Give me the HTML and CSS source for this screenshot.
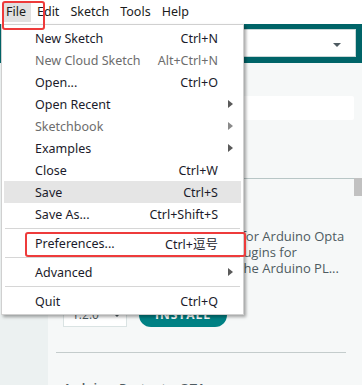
FILE: index.html
```html
<!DOCTYPE html>
<html lang="en">
<head>
    <meta charset="UTF-8">
    <title>Arduino IDE - File menu</title>
    <link rel="stylesheet" href="styles.css">
</head>
<body>
    <div class="menubar">
        <span class="menubar-item active">File</span>
        <span class="menubar-item">Edit</span>
        <span class="menubar-item">Sketch</span>
        <span class="menubar-item">Tools</span>
        <span class="menubar-item">Help</span>
    </div>

    <div class="toolbar">
        <div class="board-select">
            <span class="caret"></span>
        </div>
    </div>

    <div class="workspace">
        <div class="sidebar"></div>
        <div class="content">
            <div class="search"></div>
            <div class="divider-top"></div>
            <div class="scroll-thumb"></div>
            <div class="lib-item">
                <div class="lib-title">Arduino_Opta_Blueprint</div>
                <div class="lib-desc">
                    <div class="line">Library that extends the core for Arduino Opta</div>
                    <div class="line">Allow to use expansion and plugins for</div>
                    <div class="line">Arduino Opta from within all the Arduino PL...</div>
                </div>
                <div class="lib-actions">
                    <div class="version">1.2.0 <span class="caret small"></span></div>
                    <button class="install">INSTALL</button>
                </div>
            </div>
            <div class="lib-sep"></div>
            <div class="lib-title next">Arduino_Portenta_OTA</div>
        </div>
    </div>

    <!-- open File menu -->
    <div class="menu">
        <div class="menu-item"><span>New Sketch</span><span class="key">Ctrl+N</span></div>
        <div class="menu-item disabled"><span>New Cloud Sketch</span><span class="key">Alt+Ctrl+N</span></div>
        <div class="menu-item"><span>Open...</span><span class="key">Ctrl+O</span></div>
        <div class="menu-item sub"><span>Open Recent</span></div>
        <div class="menu-item sub disabled"><span>Sketchbook</span></div>
        <div class="menu-item sub"><span>Examples</span></div>
        <div class="menu-item"><span>Close</span><span class="key">Ctrl+W</span></div>
        <div class="menu-item hover"><span>Save</span><span class="key">Ctrl+S</span></div>
        <div class="menu-item"><span>Save As...</span><span class="key">Ctrl+Shift+S</span></div>
        <div class="menu-sep"></div>
        <div class="menu-item"><span>Preferences...</span><span class="key">Ctrl+逗号</span></div>
        <div class="menu-sep"></div>
        <div class="menu-item sub"><span>Advanced</span></div>
        <div class="menu-sep"></div>
        <div class="menu-item"><span>Quit</span><span class="key">Ctrl+Q</span></div>
    </div>

    <!-- red annotation boxes -->
    <div class="mark mark-file"></div>
    <div class="mark mark-prefs"></div>
</body>
</html>
```

FILE: styles.css
```css
body {
    margin: 0;
    width: 362px;
    height: 385px;
    overflow: hidden;
    position: relative;
    font-family: 'Noto Sans', 'Noto Sans CJK SC', sans-serif;
    background: #f6f8f8;
}

.menubar {
    height: 24px;
    background: #fff;
    display: flex;
    align-items: center;
    padding-left: 1px;
    font-size: 12.5px;
    color: #1b1b1b;
}

.menubar-item {
    padding: 0 5px;
    height: 20px;
    line-height: 20px;
    margin-right: 1px;
}

.menubar-item.active {
    background: #e1e1e1;
    margin-left: 2px;
    padding-left: 3px;
}

.toolbar {
    height: 39px;
    background: #006468;
    display: flex;
    justify-content: flex-end;
    padding: 5px 6px 0 0;
    box-sizing: border-box;
}

.board-select {
    width: 250px;
    height: 28px;
    background: #fff;
    border: 1px solid #c9d7d7;
    box-sizing: border-box;
    position: relative;
}

.caret {
    position: absolute;
    right: 14px;
    top: 13px;
    border-left: 4px solid transparent;
    border-right: 4px solid transparent;
    border-top: 4px solid #4e5b61;
}

.workspace {
    display: flex;
    height: 322px;
}

.sidebar {
    width: 48px;
    background: #ecf1f1;
}

.content {
    flex: 1;
    position: relative;
    font-family: 'Open Sans', sans-serif;
}

.search {
    margin: 33px 8px 0 8px;
    height: 24px;
    background: #fff;
    border-radius: 2px;
}

.divider-top {
    margin-top: 58px;
    height: 1px;
    background: #b8c6c6;
}

.scroll-thumb {
    position: absolute;
    right: 0;
    top: 115px;
    width: 8px;
    height: 18px;
    background: #c1c1c1;
}

.lib-item {
    padding: 0 16px 0 15px;
}

.lib-title {
    font-size: 13px;
    font-weight: 600;
    color: #4e5b61;
    height: 30px;
    line-height: 30px;
    margin-top: 19px;
}

.lib-desc {
    font-size: 13px;
    color: #4e5b61;
    line-height: 16px;
}

.line {
    white-space: nowrap;
    overflow: hidden;
}

.lib-actions {
    display: flex;
    align-items: center;
    gap: 12px;
    margin-top: 26px;
}

.version {
    width: 64px;
    height: 25px;
    box-sizing: border-box;
    border: 1px solid #dae3e3;
    background: #fff;
    font-size: 12px;
    color: #4e5b61;
    padding-left: 8px;
    line-height: 23px;
    position: relative;
}

.caret.small {
    right: 5px;
    top: 10px;
    border-top-color: #4e5b61;
}

.install {
    width: 88px;
    height: 24px;
    border: none;
    border-radius: 12px;
    background: #008184;
    color: #fff;
    font-family: 'Open Sans', sans-serif;
    font-weight: 700;
    font-size: 12px;
    letter-spacing: 1px;
}

.lib-sep {
    margin: 25px 16px 0 8px;
    height: 1px;
    background: #c4cccc;
}

.lib-title.next {
    padding-left: 15px;
    margin-top: 20px;
}

.menu {
    position: absolute;
    left: 1px;
    top: 24px;
    width: 243px;
    box-sizing: border-box;
    padding: 2px;
    background: #fff;
    border: 1px solid #d0d0d0;
    box-shadow: 2px 2px 3px rgba(0, 0, 0, 0.35);
    font-size: 12.5px;
    color: #1b1b2b;
}

.menu-item {
    height: 22px;
    display: flex;
    align-items: center;
    justify-content: space-between;
    padding: 0 23px 0 31px;
    position: relative;
}

.menu-item.disabled {
    color: #6d6d6d;
}

.menu-item.hover {
    background: #e5e5e5;
}

.menu-item.sub::after {
    content: '';
    position: absolute;
    right: 8px;
    top: 7px;
    border-top: 4px solid transparent;
    border-bottom: 4px solid transparent;
    border-left: 5px solid #5a5a5a;
}

.menu-item.sub.disabled::after {
    border-left-color: #8a8a8a;
}

.menu-sep {
    height: 1px;
    margin: 3px 1px;
    background: #d6d6d6;
}

.mark {
    position: absolute;
    border: 2px solid #ee3b3b;
    border-radius: 3px;
    box-sizing: border-box;
}

.mark-file {
    left: 2px;
    top: 1px;
    width: 43px;
    height: 29px;
}

.mark-prefs {
    left: 25px;
    top: 232px;
    width: 221px;
    height: 25px;
}
```
